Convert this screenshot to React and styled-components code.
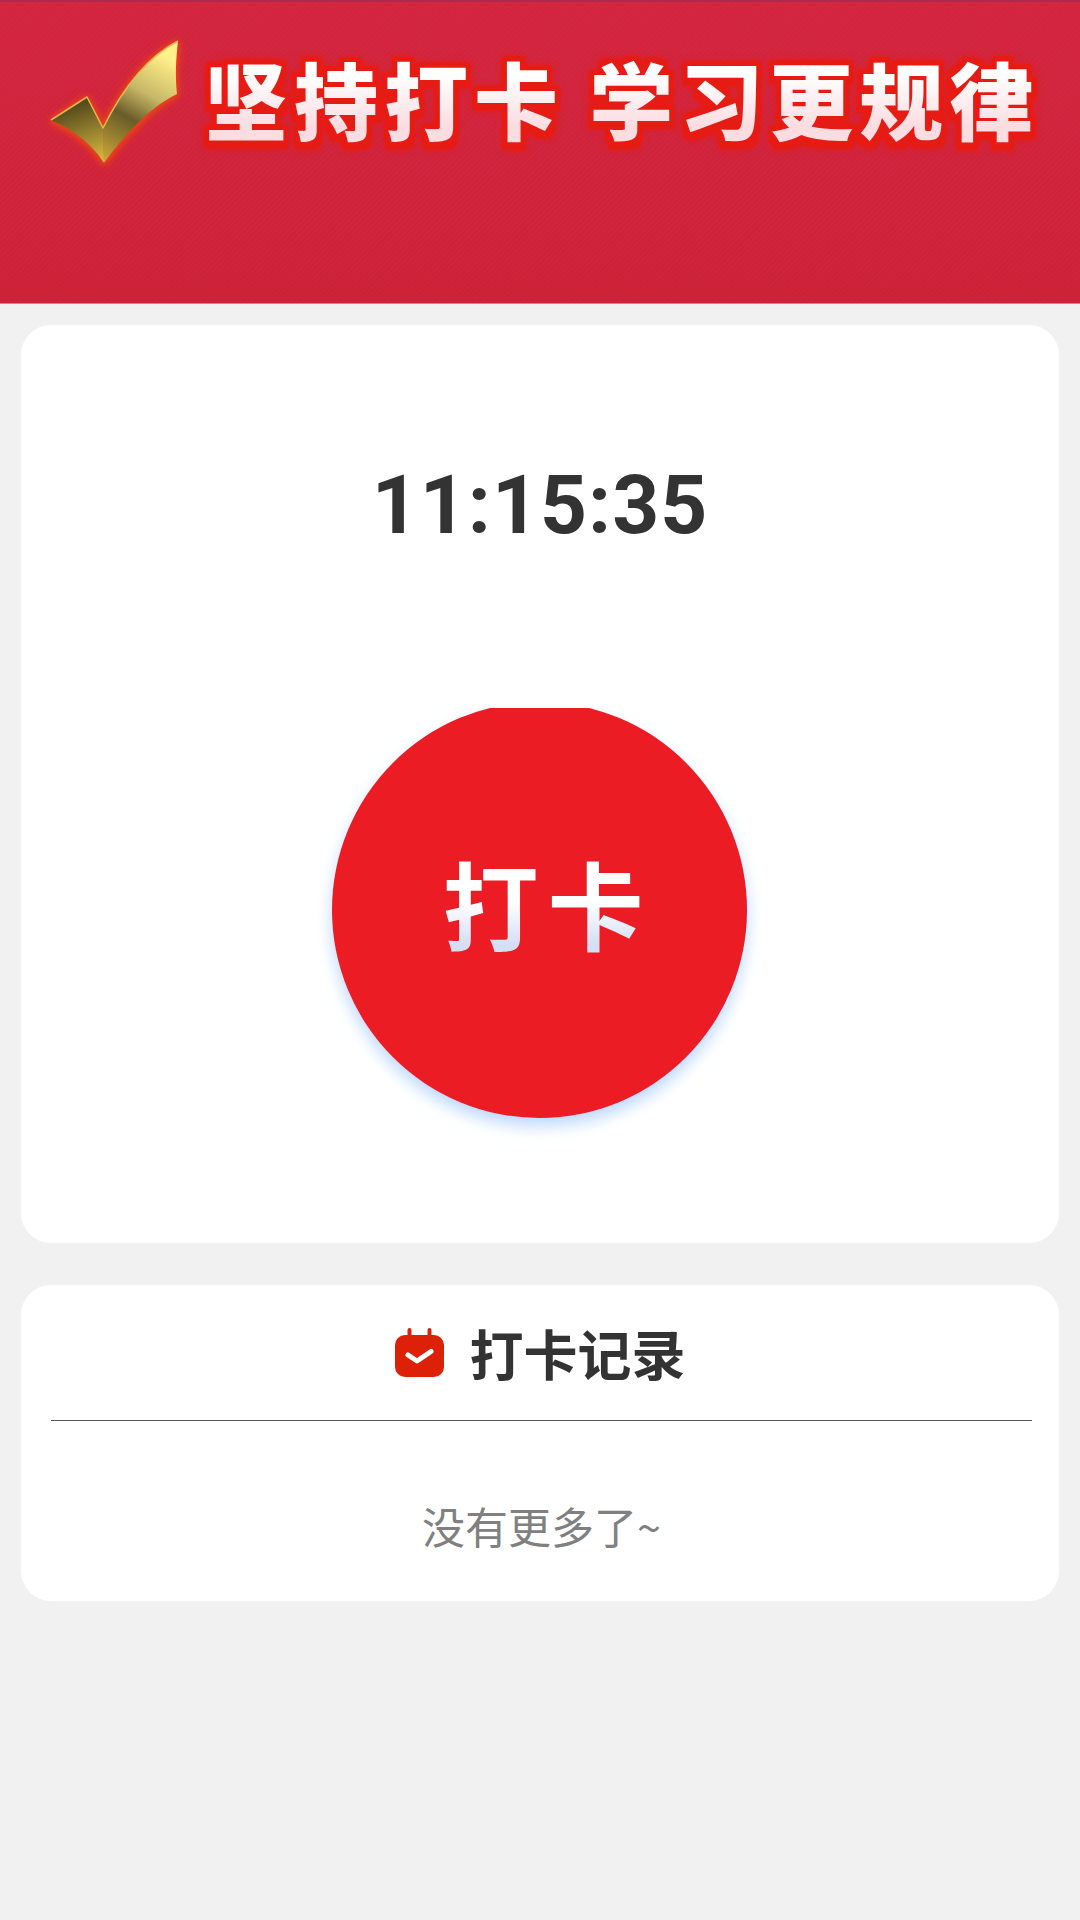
import React from "react";
import styled, { createGlobalStyle } from "styled-components";

const GlobalStyle = createGlobalStyle`
  html, body {
    margin: 0;
    padding: 0;
    background: #f1f1f1;
  }
  * {
    box-sizing: border-box;
  }
`;

const Page = styled.div`
  min-height: 1920px;
  background: #f1f1f1;
  font-family: Roboto, "Noto Sans CJK SC", sans-serif;
`;

const Banner = styled.header`
  height: 304px;
  display: flex;
  align-items: flex-start;
  padding: 38px 0 0 50px;
  border-top: 2px solid #b02a48;
  border-bottom: 1px solid #d9808e;
  background:
    repeating-linear-gradient(135deg, rgba(255, 255, 255, 0.012) 0 2px, transparent 2px 4px),
    linear-gradient(180deg, #d3253f 0%, #cd2138 100%);
`;

const CheckMark = styled.svg`
  width: 130px;
  height: 124px;
  flex: none;
  filter: drop-shadow(0 1px 3px #f04a10) drop-shadow(0 1px 4px #e8401a);
`;

const Slogan = styled.h1`
  margin: 12px 0 0 24px;
  font-family: "Noto Sans CJK SC", sans-serif;
  font-size: 84px;
  font-weight: 900;
  line-height: 92px;
  letter-spacing: 6px;
  white-space: pre;
  color: transparent;
  background: linear-gradient(180deg, #ffffff 25%, #fbdde1 80%);
  -webkit-background-clip: text;
  background-clip: text;
  filter: drop-shadow(5px 0 0 #e61c14) drop-shadow(-5px 0 0 #e61c14) drop-shadow(0 8px 0 #e61c14)
    drop-shadow(0 -5px 0 #e61c14) drop-shadow(0 0 3px #e61c14);
`;

const Content = styled.main`
  display: flex;
  flex-direction: column;
  gap: 42px;
  padding: 21px 21px 0;
`;

const Card = styled.section`
  background: #ffffff;
  border-radius: 30px;
`;

const ClockCard = styled(Card)`
  height: 918px;
  display: flex;
  flex-direction: column;
  align-items: center;
  padding-top: 130px;
`;

const Clock = styled.div`
  font-size: 82px;
  font-weight: 700;
  line-height: 100px;
  color: #333333;
  letter-spacing: 1px;
`;

const PunchClip = styled.div`
  margin: 147px 2px 0 0;
  clip-path: inset(6px -30px -30px -30px);
`;

const PunchButton = styled.button`
  width: 415px;
  height: 416px;
  display: flex;
  align-items: flex-start;
  justify-content: center;
  padding: 140px 0 0 17px;
  border: none;
  border-radius: 50%;
  background: #ec1c24;
  box-shadow: 0 8px 16px #bcd8ff;
`;

const PunchLabel = styled.span`
  font-family: "Noto Sans CJK SC", sans-serif;
  font-size: 96px;
  font-weight: 700;
  line-height: 120px;
  letter-spacing: 9px;
  color: transparent;
  background: linear-gradient(180deg, #ffffff 50%, #d4dff5 85%);
  -webkit-background-clip: text;
  background-clip: text;
`;

const RecordCard = styled(Card)`
  height: 316px;
  padding: 0 27px 0 30px;
  display: flex;
  flex-direction: column;
`;

const RecordHeader = styled.div`
  height: 136px;
  display: flex;
  align-items: center;
  justify-content: center;
  gap: 26px;
  padding: 0 3px 0 0;
  border-bottom: 1px solid #555555;
`;

const RecordIcon = styled.svg`
  width: 49px;
  height: 49px;
  flex: none;
`;

const RecordTitle = styled.h2`
  margin: 0;
  font-family: "Noto Sans CJK SC", sans-serif;
  font-size: 54px;
  font-weight: 700;
  line-height: 60px;
  color: #333333;
`;

const EndNote = styled.div`
  margin-top: 74px;
  text-align: center;
  font-family: "Noto Sans CJK SC", sans-serif;
  font-size: 43px;
  line-height: 60px;
  color: #808080;
`;

function GoldCheck() {
  return (
    <CheckMark viewBox="0 0 130 124">
      <defs>
        <linearGradient id="goldRight" gradientUnits="userSpaceOnUse" x1="115" y1="15" x2="55" y2="120">
          <stop offset="0" stopColor="#fff28a" />
          <stop offset="0.35" stopColor="#c8b868" />
          <stop offset="0.6" stopColor="#6a5c28" />
          <stop offset="1" stopColor="#c9a63a" />
        </linearGradient>
        <linearGradient id="goldLeft" gradientUnits="userSpaceOnUse" x1="30" y1="60" x2="52" y2="120">
          <stop offset="0" stopColor="#4f4519" />
          <stop offset="0.55" stopColor="#988430" />
          <stop offset="1" stopColor="#d8b840" />
        </linearGradient>
      </defs>
      <path
        d="M128 1 C95 18 72 50 53 88 L54 123 C74 96 98 68 127 54 C125 36 126 18 128 1 Z"
        fill="url(#goldRight)"
      />
      <path d="M37 57 L53 88 L54 123 C42 104 24 90 1 80 Z" fill="url(#goldLeft)" />
      <path
        d="M128 1 C95 18 72 50 53 88 L37 57 L1 80"
        fill="none"
        stroke="#e4b94e"
        strokeWidth="1.5"
        strokeLinejoin="round"
      />
    </CheckMark>
  );
}

function CalendarIcon() {
  return (
    <RecordIcon viewBox="0 0 49 49">
      <path
        d="M12.5 2 a2 2 0 0 1 4 0 V7 H32.5 V2 a2 2 0 0 1 4 0 V7 H39 a10 10 0 0 1 10 10 V39 a10 10 0 0 1 -10 10 H10 a10 10 0 0 1 -10 -10 V17 a10 10 0 0 1 10 -10 H12.5 Z"
        fill="#dc2108"
      />
      <path
        d="M13 27 L22 33 L36 23.5"
        fill="none"
        stroke="#ffffff"
        strokeWidth="5"
        strokeLinecap="round"
        strokeLinejoin="round"
      />
    </RecordIcon>
  );
}

export default function App() {
  return (
    <Page>
      <GlobalStyle />
      <Banner>
        <GoldCheck />
        <Slogan>坚持打卡 学习更规律</Slogan>
      </Banner>
      <Content>
        <ClockCard>
          <Clock>11:15:35</Clock>
          <PunchClip>
            <PunchButton type="button">
              <PunchLabel>打卡</PunchLabel>
            </PunchButton>
          </PunchClip>
        </ClockCard>
        <RecordCard>
          <RecordHeader>
            <CalendarIcon />
            <RecordTitle>打卡记录</RecordTitle>
          </RecordHeader>
          <EndNote>没有更多了~</EndNote>
        </RecordCard>
      </Content>
    </Page>
  );
}
